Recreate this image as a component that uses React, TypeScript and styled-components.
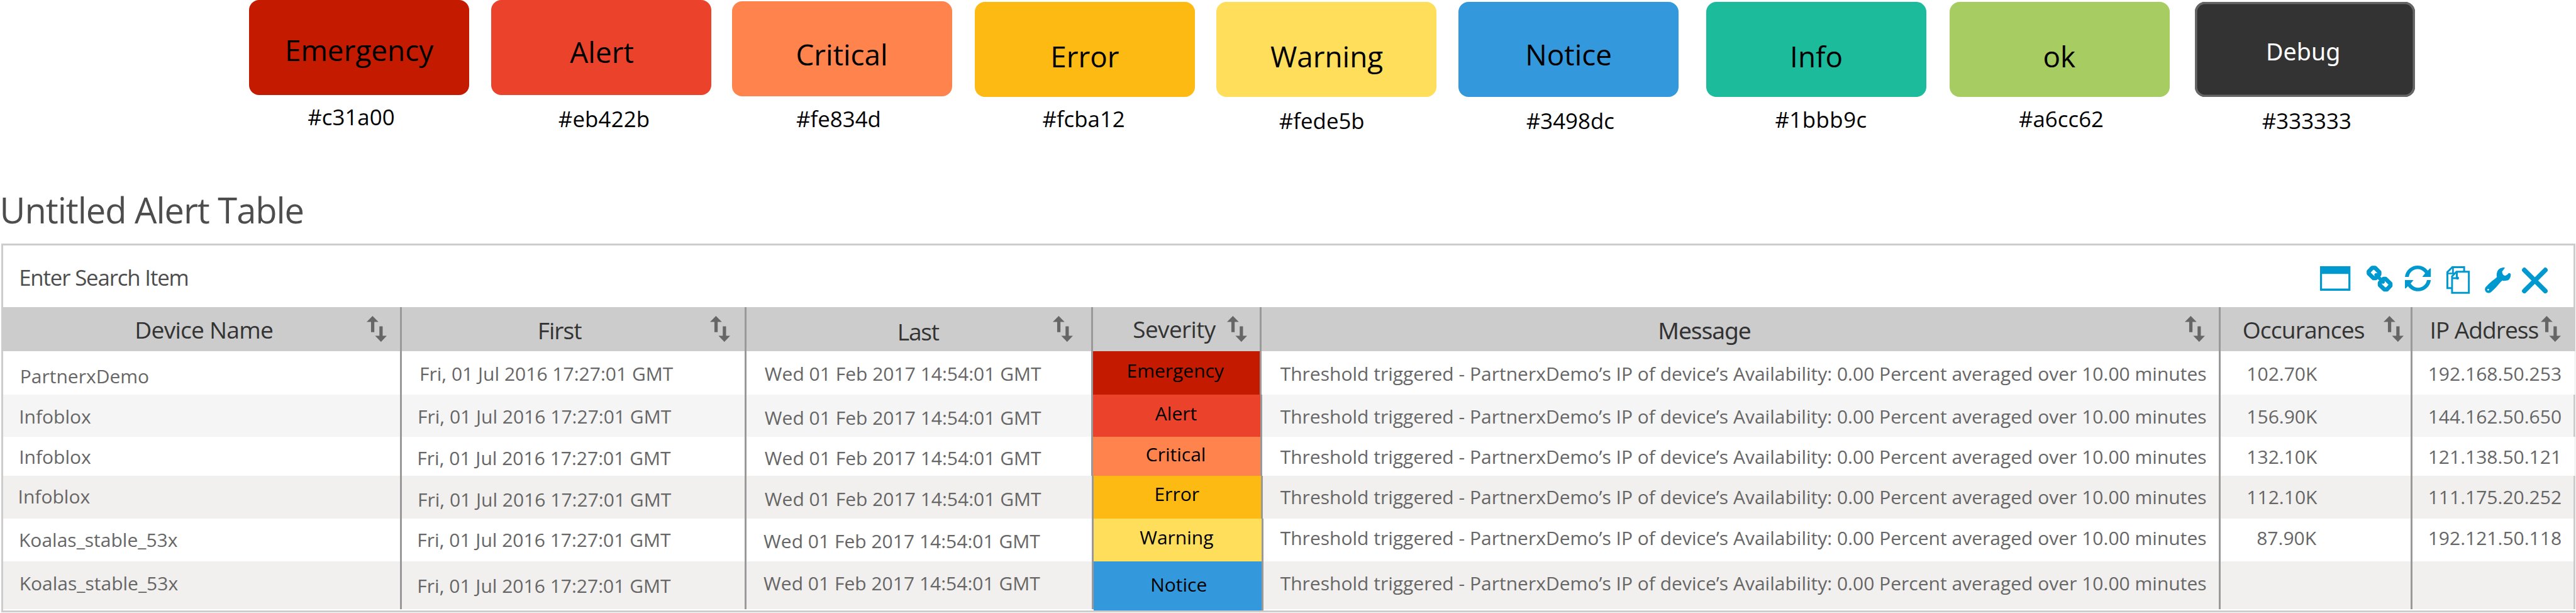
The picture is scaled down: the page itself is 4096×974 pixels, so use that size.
import React from "react";
import styled, { createGlobalStyle } from "styled-components";

/* The design grid is 5114 units wide and is drawn on a 4096px canvas. */
const SCALE = 4096 / 5114;
const u = (n: number) => `${(n * SCALE).toFixed(3)}px`;
const BASELINE = 0.888;

const GlobalStyle = createGlobalStyle`
  html, body { margin: 0; padding: 0; background: #fff; }
  body { overflow: hidden; }
`;

const Page = styled.main`
  width: 4096px;
  height: 974px;
  overflow: hidden;
  display: flex;
  flex-direction: column;
  align-items: flex-start;
  background: #fff;
  font-family: "Open Sans", "Noto Sans", sans-serif;
`;

type TextProps = {
  $x: number;
  $base: number;
  $size: number;
  $track?: number;
  $color?: string;
  $alt?: boolean;
};

/* One line of text, placed by its start and its baseline within its parent. */
const Text = styled.span<TextProps>`
  display: block;
  flex: none;
  white-space: nowrap;
  line-height: 1;
  margin: 0;
  margin-left: ${(p) => u(p.$x)};
  margin-top: ${(p) => u(p.$base - p.$size * BASELINE)};
  font-size: ${(p) => u(p.$size)};
  font-weight: 400;
  letter-spacing: ${(p) => u(p.$track ?? 0)};
  color: ${(p) => p.$color ?? "#000"};
  ${(p) => (p.$alt ? 'font-family: "Noto Sans", sans-serif;' : "")}
`;

/* ---------- severity palette ---------- */

const Palette = styled.section`
  display: flex;
  align-items: flex-start;
  height: ${u(371)};
`;

const Swatch = styled.div<{ $gap: number; $top: number }>`
  flex: none;
  display: flex;
  flex-direction: column;
  align-items: flex-start;
  width: ${u(437)};
  margin-left: ${(p) => u(p.$gap)};
  padding-top: ${(p) => u(p.$top)};
`;

const SwatchCard = styled.div<{ $fill: string; $outline?: string }>`
  box-sizing: border-box;
  display: flow-root;
  width: 100%;
  height: ${u(188.5)};
  border-radius: ${u(20)};
  background: ${(p) => p.$fill};
  box-shadow: ${(p) => (p.$outline ? `inset 0 0 0 ${u(4.5)} ${p.$outline}` : "none")};
`;

type SwatchData = {
  name: string;
  hex: string;
  fill: string;
  x: number;
  top: number;
  label: [number, number];
  code: [number, number];
  codeTrack?: number;
  outline?: string;
};

const CARD_W = 437;
const swatches: SwatchData[] = [
  { name: "Emergency", hex: "#c31a00", fill: "#c31a00", x: 495, top: 0, label: [565.5, 122.4], code: [611, 249.7] },
  { name: "Alert", hex: "#eb422b", fill: "#eb422b", x: 975.6, top: 0, label: [1131.6, 126.4], code: [1108.4, 253], codeTrack: 0.2 },
  { name: "Critical", hex: "#fe834d", fill: "#fe834d", x: 1453.2, top: 2.3, label: [1580, 130.6], code: [1580.8, 254] },
  { name: "Error", hex: "#fcba12", fill: "#fcba12", x: 1935, top: 4, label: [2085.4, 134.2], code: [2069.4, 254] },
  { name: "Warning", hex: "#fede5b", fill: "#fede5b", x: 2415, top: 4, label: [2522, 134.2], code: [2539.4, 257] },
  { name: "Notice", hex: "#3498dc", fill: "#3498dc", x: 2896, top: 4, label: [3028, 130.6], code: [3030, 257.7] },
  { name: "Info", hex: "#1bbb9c", fill: "#1bbb9c", x: 3388, top: 4, label: [3553.6, 134.2], code: [3524, 255], codeTrack: 0.6 },
  { name: "ok", hex: "#a6cc62", fill: "#a6cc62", x: 3871, top: 4, label: [4056, 134.2], code: [4008, 253] },
  { name: "Debug", hex: "#333333", fill: "#333333", x: 4357, top: 4, label: [4498.8, 121], code: [4491, 257.7], outline: "#666" },
];

/* ---------- table frame ---------- */

const TitleBar = styled.header`
  display: flow-root;
  height: ${u(112)};
`;

const Frame = styled.section`
  box-sizing: border-box;
  flex: none;
  width: ${u(5110.5)};
  height: ${u(731.8)};
  margin-left: ${u(2.5)};
  border: 3px solid #ccc;
  border-right: 0;
  display: flex;
  flex-direction: column;
`;

const Toolbar = styled.div`
  box-sizing: border-box;
  flex: none;
  display: flex;
  align-items: flex-start;
  justify-content: space-between;
  height: ${u(122)};
  border-right: 3px solid #ccc;
`;

const Actions = styled.div`
  display: flex;
  align-items: flex-start;
  margin-right: ${u(51)};
`;

const Icon = styled.svg<{ $w: number; $h: number; $gap: number; $top: number }>`
  flex: none;
  width: ${(p) => u(p.$w)};
  height: ${(p) => u(p.$h)};
  margin-left: ${(p) => u(p.$gap)};
  margin-top: ${(p) => u(p.$top)};
  color: #0099cf;
  overflow: visible;
`;

const WindowIcon = () => (
  <Icon $w={60.3} $h={48.7} $gap={0} $top={41.3} viewBox="0 0 181 146">
    <path fill="currentColor" fillRule="evenodd" d="M0 0H181V146H0ZM12 46V133H169V46Z" />
  </Icon>
);

const LinkIcon = () => (
  <Icon $w={51.7} $h={51.7} $gap={31.7} $top={40.3} viewBox="0 0 155 155">
    <g fill="none" stroke="currentColor" strokeLinejoin="round" strokeLinecap="round">
      <path strokeWidth="25" d="M13 35L34 13H50L76 39V52L54 75H42L13 47Z" />
      <path strokeWidth="25" d="M142 120L121 142H106L79 116V102L101 79H113L142 107Z" />
      <path strokeWidth="21" d="M57 55L98 97" />
    </g>
  </Icon>
);

const RefreshIcon = () => {
  const arrow =
    "M0 67C4 28 38 0 76 0C100 0 121 10 136 30L150 16L154 18V67H103L120 46C110 32 95 21 76 21C50 21 27 40 23 67Z";
  return (
    <Icon $w={51.7} $h={51} $gap={24.3} $top={40.3} viewBox="0 0 155 153">
      <path fill="currentColor" d={arrow} />
      <path fill="currentColor" transform="rotate(180 77 76.5)" d={arrow} />
    </Icon>
  );
};

const CopyIcon = () => (
  <Icon $w={46.3} $h={54.7} $gap={31.3} $top={41.3} viewBox="0 0 139 164">
    <g fill="none" stroke="currentColor" strokeWidth="11">
      <path d="M33 130H5.500V35L35 5.500H105.500V32" />
      <path strokeWidth="10" d="M39 5V42M5 43H48" />
      <path d="M60 32.500H133.500V158.500H33.500V60Z" />
      <path strokeWidth="11" d="M62 32V72M33 71H70" />
    </g>
    <circle cx="66" cy="71" r="9" fill="currentColor" />
  </Icon>
);

const WrenchIcon = () => (
  <Icon $w={51.7} $h={51.3} $gap={30.3} $top={43.6} viewBox="0 0 155 154">
    <path
      fill="currentColor"
      fillRule="evenodd"
      d="M120 2L103 24Q104 43 119 49Q130 49 142 34Q153 31 155 42Q154 78 122 79Q109 80 104 78Q94 86 84 98Q67 120 38 146Q23 158 8 147Q-5 133 4 118Q22 98 44 80Q62 67 72 57Q69 48 71 36Q77 4 105 1Q114 -1 120 2ZM20 127A5.500 5.500 0 1 0 20 138A5.500 5.500 0 1 0 20 127Z"
    />
  </Icon>
);

const CloseIcon = () => (
  <Icon $w={51.3} $h={51.7} $gap={21.7} $top={43.3} viewBox="0 0 154 155">
    <path stroke="currentColor" strokeWidth="28" strokeLinecap="round" d="M14.500 15L139.500 140M139.500 15L14.500 140" />
  </Icon>
);

/* ---------- table ---------- */

const FIRST_EDGE = 6.2;
const leftOf = (edges: number[], i: number) => (i ? edges[i - 1] : FIRST_EDGE);

const Row = styled.div<{ $edges: number[]; $height: number; $fill: string; $thinEdge?: boolean }>`
  box-sizing: border-box;
  flex: none;
  display: grid;
  grid-template-columns: ${(p) => p.$edges.map((e, i) => u(e - leftOf(p.$edges, i))).join(" ")} 1fr;
  height: ${(p) => u(p.$height)};
  background: ${(p) => p.$fill};
  border-right: ${(p) => (p.$thinEdge ? "1px solid #e4e4e4" : "3px solid #ccc")};
`;

const Cell = styled.div<{ $fill?: string; $overlap?: number }>`
  box-sizing: border-box;
  min-width: 0;
  display: flex;
  align-items: flex-start;
  background: ${(p) => p.$fill ?? "transparent"};
  margin-bottom: ${(p) => u(-(p.$overlap ?? 0))};
  border-right: 3px solid #999;
  &:last-child {
    border-right: 0;
  }
`;

const SortGlyph = styled.svg<{ $end: number }>`
  flex: none;
  width: ${u(40)};
  height: ${u(51.5)};
  margin-left: auto;
  margin-top: ${u(18.6)};
  margin-right: ${(p) => u(p.$end)};
`;

const SortIcon = ({ end }: { end: number }) => (
  <SortGlyph $end={end} viewBox="0 0 40 51.5">
    <path
      fill="#666"
      d="M11.700 0L23.400 12H15.200V32.200H8.700V12H0ZM25.300 20.500H31.800V39.200H40L28.500 51.500L16.800 39.200H25.300Z"
    />
  </SortGlyph>
);

const HEADER_TOP = 608.6;
const headerEdges = [798.2, 1481.8, 2169.6, 2505, 4408.5, 4789.2];
const columns = [
  { name: "Device Name", x: 267.6, base: 672, track: -1, size: 46.5, end: 26.5 },
  { name: "First", x: 1067.2, base: 673, track: -1.3, size: 46.5, end: 28.5 },
  { name: "Last", x: 1781.4, base: 675, track: -1.6, size: 46.5, end: 36 },
  { name: "Severity", x: 2249, base: 671.3, track: -0.7, size: 46, end: 25.5 },
  { name: "Message", x: 3291.5, base: 673, track: -1.4, size: 46.5, end: 27, alt: true },
  { name: "Occurances", x: 4452, base: 671.7, track: -1.1, size: 46.5, end: 13.5 },
  { name: "IP Address", x: 4823.6, base: 671.7, track: -1.3, size: 46.5, end: 24.7 },
];

const MESSAGE =
  "Threshold triggered - PartnerxDemo’s IP of device’s Availability: 0.00 Percent averaged over 10.00 minutes";
const FIRST = "Fri, 01 Jul 2016 17:27:01 GMT";
const LAST = "Wed 01 Feb 2017 14:54:01 GMT";

type Entry = [text: string, x: number, base: number];
type RowData = {
  top: number;
  bottom: number;
  fill: string;
  severity: string;
  thinEdge?: boolean;
  edges: number[];
  cells: Entry[];
};

const rows: RowData[] = [
  {
    top: 696.3, bottom: 782.5, fill: "#fff", severity: "#c31a00", thinEdge: true,
    edges: [798.2, 1481.8, 2169.6, 2505, 4408.5, 4789.2],
    cells: [["PartnerxDemo", 39.6, 760.8], [FIRST, 832.8, 756.4], [LAST, 1518, 756.4], ["Emergency", 2236.7, 749.6], [MESSAGE, 2541.6, 756.4], ["102.70K", 4460.2, 756.6], ["192.168.50.253", 4820.2, 756.6]],
  },
  {
    top: 782.5, bottom: 866, fill: "#f5f5f5", severity: "#eb422b",
    edges: [798.2, 1481.8, 2169.6, 2506, 4408.5, 4789.2],
    cells: [["Infoblox", 37.6, 840.6], [FIRST, 829, 840.6], [LAST, 1518, 844], ["Alert", 2293.4, 835.2], [MESSAGE, 2541.6, 840.6], ["156.90K", 4460.2, 840.6], ["144.162.50.650", 4820.2, 840.6]],
  },
  {
    top: 866, bottom: 943.5, fill: "#fff", severity: "#fe834d", thinEdge: true,
    edges: [798.2, 1482.4, 2169.6, 2506.4, 4408.5, 4789.2],
    cells: [["Infoblox", 37.6, 921.2], [FIRST, 828.2, 923.4], [LAST, 1518, 923.4], ["Critical", 2274.5, 915.4], [MESSAGE, 2541.6, 921.2], ["132.10K", 4460.2, 921.2], ["121.138.50.121", 4820.2, 921.2]],
  },
  {
    top: 943.5, bottom: 1029, fill: "#f1f0ee", severity: "#fcba12",
    edges: [798.2, 1482.4, 2170.6, 2507.4, 4408.5, 4789.2],
    cells: [["Infoblox", 35.6, 1000.2], [FIRST, 829, 1006.4], [LAST, 1518, 1004.4], ["Error", 2291.6, 994.4], [MESSAGE, 2541.6, 1000.4], ["112.10K", 4460.2, 1000.4], ["111.175.20.252", 4820.2, 1000.4]],
  },
  {
    top: 1029, bottom: 1113.4, fill: "#fff", severity: "#fede5b",
    edges: [798.2, 1482.4, 2171.4, 2508, 4408.5, 4789.2],
    cells: [["Koalas_stable_53x", 37.4, 1085.2], [FIRST, 828.2, 1085.6], [LAST, 1515.8, 1088.6], ["Warning", 2262.6, 1080.4], [MESSAGE, 2541.6, 1082.6], ["87.90K", 4480, 1082.2], ["192.121.50.118", 4820.2, 1082.2]],
  },
  {
    top: 1113.4, bottom: 1208.6, fill: "#f1f0ee", severity: "#3498dc",
    edges: [797.4, 1482.4, 2171.4, 2508.4, 4408.5, 4789.2],
    cells: [["Koalas_stable_53x", 38.2, 1171.4], [FIRST, 828.2, 1177.2], [LAST, 1515.8, 1171.4], ["Notice", 2283.8, 1174.4], [MESSAGE, 2541.6, 1171.6], ["", 4459, 1171], ["", 4819, 1171]],
  },
];

export default function App() {
  return (
    <Page>
      <GlobalStyle />
      <Palette>
        {swatches.map((s, i) => (
          <Swatch key={s.name} $gap={s.x - (i ? swatches[i - 1].x + CARD_W : 0)} $top={s.top}>
            <SwatchCard $fill={s.fill} $outline={s.outline}>
              <Text
                $x={s.label[0] - s.x}
                $base={s.label[1] - s.top}
                $size={s.outline ? 47 : 57.3}
                $color={s.outline ? "#fff" : "#000"}
                $alt={!!s.outline}
              >
                {s.name}
              </Text>
            </SwatchCard>
            <Text $x={s.code[0] - s.x} $base={s.code[1] - s.top - 188.5} $size={43.5} $track={s.codeTrack}>
              {s.hex}
            </Text>
          </Swatch>
        ))}
      </Palette>

      <TitleBar>
        <Text as="h1" $x={-0.5} $base={71.4} $size={70} $track={-1.3} $color="#4d4d4d">
          Untitled Alert Table
        </Text>
      </TitleBar>

      <Frame>
        <Toolbar>
          <Text $x={31.4} $base={81.4} $size={43.5} $track={-1.45} $color="#4d4d4d">
            Enter Search Item
          </Text>
          <Actions>
            <WindowIcon />
            <LinkIcon />
            <RefreshIcon />
            <CopyIcon />
            <WrenchIcon />
            <CloseIcon />
          </Actions>
        </Toolbar>

        <Row $edges={headerEdges} $height={87.7} $fill="#ccc">
          {columns.map((c, i) => (
            <Cell key={c.name}>
              <Text
                $x={c.x - leftOf(headerEdges, i)}
                $base={c.base - HEADER_TOP}
                $size={c.size}
                $track={c.track}
                $color="#333"
                $alt={c.alt}
              >
                {c.name}
              </Text>
              <SortIcon end={c.end} />
            </Cell>
          ))}
        </Row>

        {rows.map((r, n) => (
          <Row key={n} $edges={r.edges} $height={r.bottom - r.top} $fill={r.fill} $thinEdge={r.thinEdge}>
            {r.cells.map(([text, x, base], i) => (
              <Cell key={i} $fill={i === 3 ? r.severity : undefined} $overlap={i === 3 && n === rows.length - 1 ? 2.4 : 0}>
                <Text $x={x - leftOf(r.edges, i)} $base={base - r.top} $size={37.5} $color={i === 3 ? "#000" : "#666"}>
                  {text}
                </Text>
              </Cell>
            ))}
          </Row>
        ))}
      </Frame>
    </Page>
  );
}
